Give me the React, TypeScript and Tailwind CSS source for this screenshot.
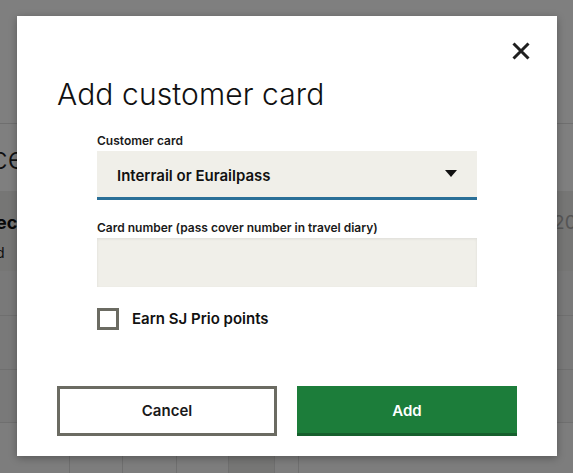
import React from "react";

export default function App() {
  return (
    <div className="relative w-[573px] h-[473px] overflow-hidden bg-white font-['Inter',sans-serif]">
      {/* underlying page */}
      <div className="flex flex-col w-full h-full">
        <div className="h-[124px] shrink-0 border-b border-[#dedede]" />
        <div className="h-[67px] shrink-0 flex items-center">
          <span className="-ml-[9px] text-[30px] leading-none font-light text-[#1e1e1e]">ce Pris</span>
        </div>
        <div className="h-[80px] shrink-0 bg-[#ececea] flex justify-between">
          <div className="flex flex-col pt-[20px] -ml-[4px]">
            <span className="text-[18px] leading-[24px] font-bold text-[#111]">ecial</span>
            <span className="text-[14px] leading-[20px] mt-[8px] text-[#222]">d</span>
          </div>
          <span className="text-[19px] leading-[24px] mt-[20px] text-[#aaa] -mr-[27px]">2023</span>
        </div>
        <div className="h-[45px] shrink-0 border-b border-[#dedede] bg-[#f2f2f2]" />
        <div className="h-[54px] shrink-0 border-b border-[#dedede] bg-[#f2f2f2]" />
        <div className="h-[53px] shrink-0 border-b border-[#dedede] bg-[#f2f2f2]" />
        <div className="flex-1 flex bg-[#fafafa]">
          <div className="w-[70px] border-r border-[#dedede]" />
          <div className="w-[53px] border-r border-[#dedede]" />
          <div className="w-[54px] border-r border-[#dedede]" />
          <div className="w-[52px] border-r border-[#dedede]" />
          <div className="w-[46px] border-r border-[#dedede] bg-[#ececea]" />
          <div className="w-[24px] border-r border-[#dedede]" />
          <div className="flex-1" />
        </div>
      </div>

      {/* overlay */}
      <div className="absolute inset-0 bg-black/50" />

      {/* modal */}
      <div className="absolute left-[17px] top-[16px] w-[540px] h-[440px] bg-white shadow-[0_2px_8px_rgba(0,0,0,0.3)] flex flex-col px-[40px] pt-[23px] pb-[20px]">
        <div className="flex justify-end -mr-[16px]">
          <svg width="24" height="24" viewBox="0 0 24 24" className="text-[#1f1f1f]">
            <path d="M4.5 4.5 L19.5 19.5 M19.5 4.5 L4.5 19.5" stroke="currentColor" strokeWidth="3" strokeLinecap="butt" fill="none" />
          </svg>
        </div>
        <h2 className="mt-[13px] text-[30px] leading-[36px] font-light text-[#111] tracking-[0.1px]">
          Add customer card
        </h2>

        <div className="ml-[40px] w-[380px] flex flex-col">
          <label className="mt-[21px] mb-[2px] text-[12px] leading-[16px] font-semibold text-[#1a1a1a]">
            Customer card
          </label>
          <div className="h-[49px] bg-[#f0efe9] border-b-[3px] border-[#2a6f97] flex items-center justify-between pl-[20px] pr-[20px] pt-[4px]">
            <span className="text-[15px] leading-[20px] font-semibold text-[#111]">Interrail or Eurailpass</span>
            <svg width="12" height="8" viewBox="0 0 12 8" className="-mt-[4px]">
              <path d="M0 0 L12 0 L6 7 Z" fill="#111" />
            </svg>
          </div>

          <label className="mt-[20px] mb-[2px] text-[12px] leading-[16px] font-semibold text-[#1a1a1a]">
            Card number (pass cover number in travel diary)
          </label>
          <div className="h-[49px] bg-[#f0efe9] shadow-[inset_0_1px_3px_rgba(0,0,0,0.08)]" />

          <div className="mt-[21px] flex items-center gap-[13px]">
            <div className="w-[22px] h-[22px] border-[3px] border-[#6b6b62] bg-white" />
            <span className="text-[15px] leading-[20px] font-semibold text-[#111]">Earn SJ Prio points</span>
          </div>
        </div>

        <div className="mt-[56px] flex gap-[20px]">
          <button className="w-[220px] h-[50px] border-[3px] border-[#6b6b62] bg-white text-[15px] font-semibold text-[#1a1a1a]">
            Cancel
          </button>
          <button className="w-[220px] h-[50px] bg-[#1c7d3a] border-b-[3px] border-[#165f2d] text-[15px] font-semibold text-white pt-[3px]">
            Add
          </button>
        </div>
      </div>
    </div>
  );
}
